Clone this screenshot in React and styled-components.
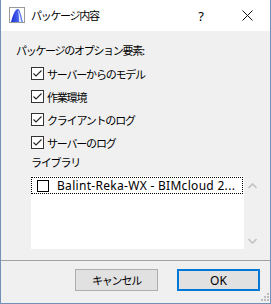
import React from 'react'
import styled, { createGlobalStyle } from 'styled-components'

const GlobalStyle = createGlobalStyle`
  html, body {
    margin: 0;
    padding: 0;
    background: #f0f0f0;
  }
`

const jpFont = `"Noto Sans CJK JP", "Noto Sans", sans-serif`
const uiFont = `"Noto Sans", "Noto Sans CJK JP", sans-serif`

const options = ['サーバーからのモデル', '作業環境', 'クライアントのログ', 'サーバーのログ']

const AppIcon = () => (
  <svg width='16' height='16' viewBox='0 0 16 16'>
    <defs>
      <linearGradient id='ic' x1='0' y1='0' x2='1' y2='0'>
        <stop offset='0' stopColor='#1a2fd8' />
        <stop offset='1' stopColor='#6a86f5' />
      </linearGradient>
    </defs>
    <rect x='0.5' y='0.5' width='15' height='15' fill='#fff' stroke='#9a9a9a' />
    <path d='M2 15 C4 8 6 2 9 2 C11 2 12 8 14 15 Z' fill='url(#ic)' />
    <path d='M9 3 C10.5 5 11.5 10 12.5 15 L10 15 C10 10 9.6 6 9 3 Z' fill='#fff' opacity='0.8' />
  </svg>
)

const Check = () => (
  <svg width='11' height='11' viewBox='0 0 11 11'>
    <polyline points='1.5,5.5 4,8 9.5,2.5' fill='none' stroke='#222' strokeWidth='1.1' />
  </svg>
)

const Chevron = ({ down }) => (
  <svg width='9' height='6' viewBox='0 0 9 6'>
    <polyline
      points={down ? '0.5,1 4.5,5 8.5,1' : '0.5,5 4.5,1 8.5,5'}
      fill='none'
      stroke='#c2c2c2'
      strokeWidth='1.6'
    />
  </svg>
)

const App = () => {
  return (
    <Window>
      <GlobalStyle />
      <TitleBar>
        <IconSlot>
          <AppIcon />
        </IconSlot>
        <Title>パッケージ内容</Title>
        <Help>?</Help>
        <Close>
          <svg width='11' height='11' viewBox='0 0 11 11'>
            <path d='M0.5 0.5 L10.5 10.5 M10.5 0.5 L0.5 10.5' stroke='#111' strokeWidth='1' />
          </svg>
        </Close>
      </TitleBar>
      <Body>
        <Heading>パッケージのオプション要素:</Heading>
        <Options>
          {options.map(label => (
            <OptionRow key={label}>
              <CheckBox>
                <Check />
              </CheckBox>
              <Label>{label}</Label>
            </OptionRow>
          ))}
        </Options>
        <SubHeading>ライブラリ</SubHeading>
        <ListFrame>
          <List>
            <ListItem>
              <ItemBox />
              <ItemText>Balint-Reka-WX - BIMcloud 2...</ItemText>
            </ListItem>
          </List>
          <ScrollBar>
            <Chevron />
            <Chevron down />
          </ScrollBar>
        </ListFrame>
      </Body>
      <Separator />
      <Footer>
        <Button>キャンセル</Button>
        <Button primary>OK</Button>
        <Grip>
          <svg width='8' height='8' viewBox='0 0 8 8'>
            <rect x='6' y='0' width='2' height='2' fill='#bdbdbd' />
            <rect x='3' y='3' width='2' height='2' fill='#bdbdbd' />
            <rect x='6' y='3' width='2' height='2' fill='#bdbdbd' />
            <rect x='0' y='6' width='2' height='2' fill='#bdbdbd' />
            <rect x='3' y='6' width='2' height='2' fill='#bdbdbd' />
            <rect x='6' y='6' width='2' height='2' fill='#bdbdbd' />
          </svg>
        </Grip>
      </Footer>
    </Window>
  )
}

const Window = styled.div`
  position: relative;
  box-sizing: border-box;
  width: 271px;
  height: 304px;
  display: flex;
  flex-direction: column;
  background: #f0f0f0;
  border: 1px solid #7092b8;
  border-top: none;
  font-family: ${jpFont};
  color: #000;
`

const TitleBar = styled.div`
  height: 31px;
  flex-shrink: 0;
  display: flex;
  align-items: center;
  background: #fff;
`

const IconSlot = styled.div`
  width: 16px;
  height: 16px;
  margin: 0 6px 2px 8px;
  display: flex;
`

const Title = styled.div`
  flex: 1;
  font-size: 11px;
  letter-spacing: -1.3px;
  line-height: 16px;
  margin-bottom: 1px;
`

const Help = styled.div`
  width: 46px;
  text-align: center;
  font-family: ${uiFont};
  font-size: 13px;
`

const Close = styled.div`
  width: 46px;
  display: flex;
  justify-content: center;
`

const Body = styled.div`
  height: 229px;
  box-sizing: border-box;
  padding: 11px 7px 0 15px;
  display: flex;
  flex-direction: column;
`

const Heading = styled.div`
  font-size: 11px;
  letter-spacing: -1.3px;
  line-height: 16px;
  white-space: nowrap;
`

const Options = styled.div`
  margin-top: 4px;
  padding-left: 15px;
`

const OptionRow = styled.div`
  height: 23px;
  display: flex;
  align-items: center;
`

const CheckBox = styled.div`
  box-sizing: border-box;
  width: 13px;
  height: 13px;
  border: 1px solid #333;
  background: #fff;
  display: flex;
  align-items: center;
  justify-content: center;
  margin-right: 3px;
`

const Label = styled.span`
  font-size: 11px;
  letter-spacing: -1.2px;
  line-height: 16px;
`

const SubHeading = styled.div`
  padding-left: 15px;
  font-size: 11px;
  letter-spacing: -1.2px;
  line-height: 16px;
`

const ListFrame = styled.div`
  margin: 6px 0 0 15px;
  height: 73px;
  display: flex;
`

const List = styled.div`
  width: 213px;
  background: #fff;
  box-sizing: border-box;
  padding-top: 1px;
`

const ListItem = styled.div`
  box-sizing: border-box;
  height: 17px;
  width: 212px;
  border: 1px dotted #000;
  display: flex;
  align-items: center;
  padding-left: 5px;
`

const ItemBox = styled.div`
  box-sizing: border-box;
  width: 12px;
  height: 12px;
  border: 1px solid #000;
  background: #fff;
  margin-right: 8px;
`

const ItemText = styled.span`
  font-family: ${uiFont};
  font-size: 12px;
  letter-spacing: 0.3px;
  line-height: 15px;
  white-space: nowrap;
`

const ScrollBar = styled.div`
  width: 17px;
  display: flex;
  flex-direction: column;
  justify-content: space-between;
  align-items: center;
  padding: 7px 0 5px;
  box-sizing: border-box;
`

const Separator = styled.div`
  height: 1px;
  background: #a0a0a0;
  flex-shrink: 0;
`

const Footer = styled.div`
  flex: 1;
  display: flex;
  justify-content: flex-end;
  align-items: flex-start;
  gap: 19px;
  padding: 8px 10px 0 0;
`

const Button = styled.div`
  box-sizing: border-box;
  width: 83px;
  height: 22px;
  display: flex;
  align-items: center;
  justify-content: center;
  background: #e1e1e1;
  border: ${p => (p.primary ? '2px solid #0078d7' : '1px solid #adadad')};
  font-family: ${p => (p.primary ? uiFont : jpFont)};
  font-size: ${p => (p.primary ? '12px' : '11px')};
  letter-spacing: ${p => (p.primary ? '0' : '-1.2px')};
`

const Grip = styled.div`
  position: absolute;
  right: 1px;
  bottom: 2px;
  display: flex;
`

export default App
